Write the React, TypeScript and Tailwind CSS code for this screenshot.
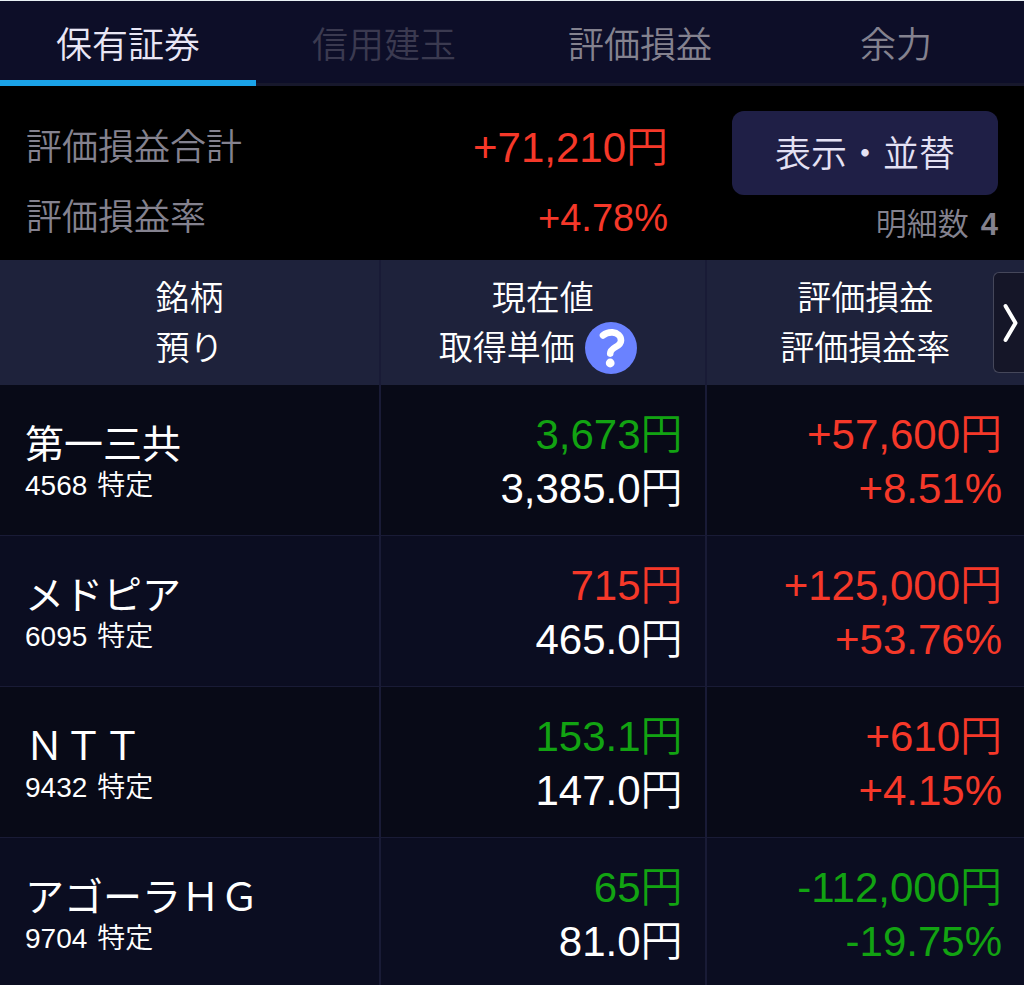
import { useState } from 'react'
import clsx from 'clsx'

type Tone = 'up' | 'down'

interface Holding {
  code: string
  name: string
  account: string
  price: string
  priceTone: Tone
  cost: string
  profit: string
  rate: string
  profitTone: Tone
}

const TABS = [
  { id: 'holdings', label: '保有証券' },
  { id: 'margin', label: '信用建玉', disabled: true },
  { id: 'profit', label: '評価損益' },
  { id: 'capacity', label: '余力' },
]

const HOLDINGS: Holding[] = [
  { code: '4568', name: '第一三共', account: '特定', price: '3,673円', priceTone: 'down', cost: '3,385.0円', profit: '+57,600円', rate: '+8.51%', profitTone: 'up' },
  { code: '6095', name: 'メドピア', account: '特定', price: '715円', priceTone: 'up', cost: '465.0円', profit: '+125,000円', rate: '+53.76%', profitTone: 'up' },
  { code: '9432', name: 'ＮＴＴ', account: '特定', price: '153.1円', priceTone: 'down', cost: '147.0円', profit: '+610円', rate: '+4.15%', profitTone: 'up' },
  { code: '9704', name: 'アゴーラＨＧ', account: '特定', price: '65円', priceTone: 'down', cost: '81.0円', profit: '-112,000円', rate: '-19.75%', profitTone: 'down' },
]

const TONE_CLASS: Record<Tone, string> = {
  up: 'text-[#f53829]',
  down: 'text-[#12a312]',
}

function HelpIcon() {
  return (
    <svg viewBox="0 0 52 52" className="size-[52px]" aria-hidden="true">
      <circle cx="26" cy="26" r="26" fill="#6a82ff" />
      <path
        d="M18 13.4C21 11 24.5 10.2 27.5 10.4C32.5 10.8 36 13.8 36 18.4C36 25.4 25.2 24.6 25.2 31.6"
        fill="none"
        stroke="#fff"
        strokeWidth="6.6"
        strokeLinecap="round"
        strokeLinejoin="round"
      />
      <circle cx="25.2" cy="41" r="4.4" fill="#fff" />
    </svg>
  )
}

function TabBar() {
  const [active, setActive] = useState('holdings')

  return (
    <nav className="flex h-[86px] border-t border-[#e8f0f4] bg-[#0d0e28]" role="tablist">
      {TABS.map((tab) => (
        <button
          key={tab.id}
          type="button"
          role="tab"
          aria-selected={tab.id === active}
          disabled={tab.disabled}
          onClick={() => setActive(tab.id)}
          className={clsx(
            'flex flex-1 flex-col justify-between pt-[18px] text-4xl leading-[54px]',
            tab.id === active ? 'text-[#e9e6f5]' : tab.disabled ? 'text-[#3b3a50]' : 'text-[#84828f]',
          )}
        >
          <span className="w-full">{tab.label}</span>
          <span className={clsx('w-full', tab.id === active ? 'h-1.5 bg-[#1ba3e8]' : 'h-[3px] bg-[#17182c]')} />
        </button>
      ))}
    </nav>
  )
}

function Summary() {
  return (
    <section className="flex h-[174px] items-start bg-black px-[26px] pt-[25px]">
      <dl className="flex-1 pt-0.5 pr-16">
        <div className="flex h-[70px] items-center justify-between">
          <dt className="text-4xl text-[#84828f]">評価損益合計</dt>
          <dd className="text-[42px] leading-[70px] text-[#f53829]">+71,210円</dd>
        </div>
        <div className="flex h-[70px] items-center justify-between">
          <dt className="text-4xl text-[#84828f]">評価損益率</dt>
          <dd className="text-[38px] leading-[70px] text-[#f53829]">+4.78%</dd>
        </div>
      </dl>
      <div className="flex w-[266px] flex-col items-end">
        <button type="button" className="h-[84px] w-full rounded-xl bg-[#1f1f46] pt-1 text-4xl text-[#e4e1f4]">
          表示・並替
        </button>
        <p className="flex gap-3 pt-2 text-[31px] leading-[44px] text-[#84828f]">
          明細数 <span className="font-bold">4</span>
        </p>
      </div>
    </section>
  )
}

export default function App() {
  return (
    <main className="min-h-screen overflow-hidden bg-[#080a17] font-['Liberation_Sans','Noto_Sans_CJK_JP',sans-serif] font-[350] text-white">
      <TabBar />
      <Summary />
      <div className="relative">
        <table className="w-full table-fixed border-separate border-spacing-0">
          <colgroup>
            <col className="w-[37.2%]" />
            <col className="w-[31.8%]" />
            <col />
          </colgroup>
          <thead>
            <tr className="h-[125px] bg-[#1e223b] text-[34px] leading-[50px]">
              <th scope="col" className="border-r-2 border-[#191b36] font-[350]">
                銘柄
                <br />
                預り
              </th>
              <th scope="col" className="border-r-2 border-[#191b36] font-[350]">
                現在値
                <div className="flex h-[50px] items-center justify-center gap-2.5 pr-2.5">
                  取得単価
                  <button type="button" aria-label="取得単価について">
                    <HelpIcon />
                  </button>
                </div>
              </th>
              <th scope="col" className="font-[350]">
                評価損益
                <br />
                評価損益率
              </th>
            </tr>
          </thead>
          <tbody>
            {HOLDINGS.map((item) => (
              <tr key={item.code} className="h-[151px] align-top odd:bg-[#080a17] even:bg-[#0b0d21] last:h-[148px]">
                <td className="border-r-2 border-b border-[#191b36] pt-[38px] pl-[25px]">
                  <div className="text-[39px] leading-[44px] font-normal">{item.name}</div>
                  <div className="flex gap-2.5 text-[28px] leading-[38px]">
                    <span>{item.code}</span>
                    <span>{item.account}</span>
                  </div>
                </td>
                <td className="border-r-2 border-b border-[#191b36] pt-[23px] pr-[22px] text-right text-[42px] leading-[54px]">
                  <div className={TONE_CLASS[item.priceTone]}>{item.price}</div>
                  <div>{item.cost}</div>
                </td>
                <td
                  className={clsx(
                    'border-b border-[#191b36] pt-[23px] pr-[22px] text-right text-[42px] leading-[54px]',
                    TONE_CLASS[item.profitTone],
                  )}
                >
                  <div>{item.profit}</div>
                  <div>{item.rate}</div>
                </td>
              </tr>
            ))}
          </tbody>
        </table>

        {/* Scroll handle over the header's right edge */}
        <button
          type="button"
          aria-label="次の項目を表示"
          className="absolute top-3 right-0 flex h-[101px] w-[31px] items-center justify-center rounded-l-md border border-r-0 border-[#45475a] bg-[#151628] pl-0.5"
        >
          <svg viewBox="0 0 16 40" className="h-10 w-4" aria-hidden="true">
            <path d="M3.5 3L13.5 20L3.5 37" fill="none" stroke="#fff" strokeWidth="4" strokeLinecap="round" strokeLinejoin="round" />
          </svg>
        </button>
      </div>
    </main>
  )
}
